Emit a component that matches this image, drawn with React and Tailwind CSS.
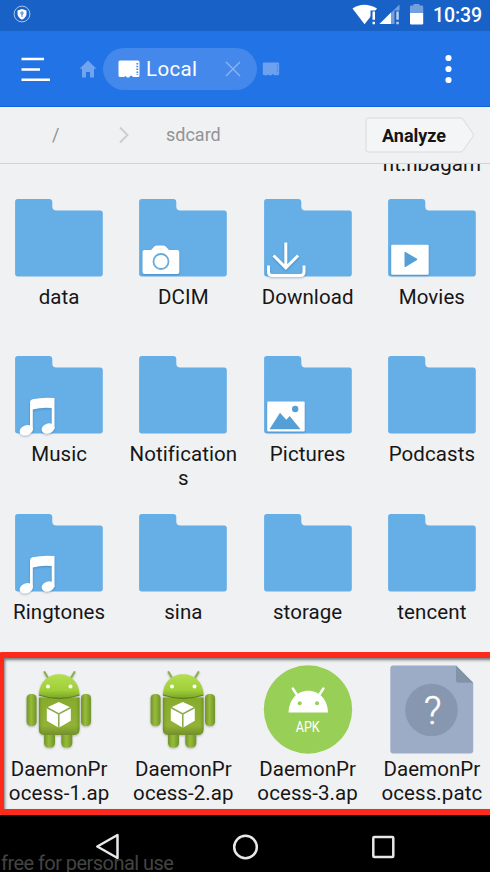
import React from "react";

const Folder = ({ children }) => (
  <svg viewBox="0 0 90 90" className="block w-[90px] h-[90px] overflow-visible">
    <path d="M3.800 6h31.300q3.200 0 3.200 3.200v4.300q0 4 4 4h43.800q2.700 0 2.700 2.700v60.600q0 2.700-2.700 2.700H3.800q-2.700 0-2.700-2.700V8.700Q1.100 6 3.800 6z" fill="#65aee6" />
    <g className="drop-shadow-[0_1px_1px_rgba(20,80,140,0.35)]">{children}</g>
  </svg>
);

const Camera = () => (
  <>
    <path d="M6.500 57h6.500l3.500-3.700q.9-.8 2-.8h7q1.200 0 2 .8l3.500 3.700h8.300q2 0 2 2V79q0 2-2 2H6.500q-2 0-2-2V59q0-2 2-2z" fill="#fff" />
    <circle cx="23" cy="68.500" r="7.500" fill="none" stroke="#6aabdc" strokeWidth="1.800" />
  </>
);
const Download = () => (
  <g fill="none" stroke="#fff" strokeWidth="3">
    <path d="M22.800 49.500v25M10.500 62.500l12.300 12.300 12.300-12.300" />
    <path d="M5.500 72.500v6.500q0 3.500 3.500 3.500h28.500q3.500 0 3.500-3.500v-6.500" />
  </g>
);
const Movie = () => (
  <>
    <rect x="4.200" y="51.800" width="37.500" height="30" rx="1" fill="#fff" />
    <path d="M17.500 59.500q0-1 1-.6L30 65.800q.8.600 0 1.200l-11.500 7q-1 .400-1-.6z" fill="#549fd6" />
  </>
);
const Music = () => (
  <>
    <path d="M16 77.500V52q.2-2.200 2.400-2.700Q28 47 40.500 48v31h-2.800V58q-10-1-18.900 1.500v20H16z" fill="#fff" />
    <ellipse cx="12.300" cy="80.300" rx="6.900" ry="5" transform="rotate(-22 12.300 80.300)" fill="#fff" />
    <ellipse cx="34" cy="78.600" rx="6.600" ry="5" transform="rotate(-22 34 78.600)" fill="#fff" />
  </>
);
const Picture = () => (
  <>
    <rect x="4.200" y="51.500" width="37.500" height="30" rx="1" fill="#fff" />
    <path d="M6.500 79.200L17 62.800l6.300 7 3.400-3.800 10.800 13.200z" fill="#549fd6" />
    <circle cx="32.200" cy="59" r="3.200" fill="#549fd6" />
  </>
);

const Robot = () => (
  <svg viewBox="0 0 90 90" className="block w-[90px] h-[90px]">
    <defs>
      <linearGradient id="head" x1="0" y1="0" x2="0" y2="1">
        <stop offset="0" stopColor="#b4de50" /><stop offset=".65" stopColor="#a0cf38" /><stop offset="1" stopColor="#7ba328" />
      </linearGradient>
      <linearGradient id="limb" x1="0" y1="0" x2="1" y2="0">
        <stop offset="0" stopColor="#71952b" /><stop offset=".45" stopColor="#98bc38" /><stop offset="1" stopColor="#6f932a" />
      </linearGradient>
      <linearGradient id="trunk" x1="0" y1="0" x2="0" y2="1">
        <stop offset="0" stopColor="#86ab2c" /><stop offset=".75" stopColor="#91b236" /><stop offset="1" stopColor="#728f2b" />
      </linearGradient>
      <linearGradient id="edge" x1="0" y1="0" x2="1" y2="0">
        <stop offset="0" stopColor="#4d6e12" stopOpacity=".45" /><stop offset=".12" stopColor="#91b62e" stopOpacity="0" />
        <stop offset=".88" stopColor="#91b62e" stopOpacity="0" /><stop offset="1" stopColor="#4d6e12" stopOpacity=".45" />
      </linearGradient>
    </defs>
    <g className="drop-shadow-[0_1px_1px_rgba(60,70,40,0.35)]">
      <rect x="30" y="63" width="11" height="19.500" rx="4.500" fill="url(#limb)" />
      <rect x="47.300" y="63" width="11" height="19.500" rx="4.500" fill="url(#limb)" />
      <rect x="12.600" y="29" width="10" height="32" rx="4.200" fill="url(#limb)" />
      <rect x="67" y="29" width="10" height="32" rx="4.200" fill="url(#limb)" />
      <path d="M34 13l-3.500-6M57 13l3.500-6" stroke="#8bad50" strokeWidth="2" strokeLinecap="round" />
      <path d="M24.900 32.500h40.600v31.500q0 6-6 6H30.900q-6 0-6-6z" fill="url(#trunk)" />
      <path d="M24.900 32.500h40.600v31.500q0 6-6 6H30.900q-6 0-6-6z" fill="url(#edge)" />
      <path d="M24.900 29.500C25.500 17 34 9.300 45.200 9.300S65 17 65.500 29.500Q55 33.500 45.200 33.500T24.900 29.500z" fill="url(#head)" />
      <path d="M24.900 30Q35 33.500 45.200 33.500T65.500 30" fill="none" stroke="#5e8120" strokeWidth="1.300" />
    </g>
    <circle cx="34" cy="21.500" r="2" fill="#fff" /><circle cx="56.500" cy="21.500" r="2" fill="#fff" />
    <path d="M44.800 37l12 5.500V55.700l-12 7-12-7V42.500z" fill="#fff" />
    <path d="M32.800 42.500l12 6.300 12-6.300M44.800 48.800v13.900" fill="none" stroke="#89a94d" strokeWidth="1.500" />
  </svg>
);

const Apk = () => (
  <svg viewBox="0 0 90 90" className="block w-[90px] h-[90px]">
    <circle cx="45" cy="44.500" r="44.200" fill="#98cf57" />
    <path d="M25.500 47.600C26 34.800 34 25.800 45.200 25.800S64.600 34.800 65 47.600z" fill="#fff" />
    <path d="M34 30l-4.200-6.500M56.200 30l4.200-6.500" stroke="#fff" strokeWidth="2.400" strokeLinecap="round" />
    <circle cx="36.700" cy="38.300" r="2" fill="#98cf57" /><circle cx="54" cy="38.300" r="2" fill="#98cf57" />
    <text x="44.700" y="66.600" textAnchor="middle" fontSize="14" textLength="24" lengthAdjust="spacingAndGlyphs" fill="#fff" className="font-[Roboto,sans-serif]">APK</text>
  </svg>
);

const Unknown = () => (
  <svg viewBox="0 0 90 90" className="block w-[90px] h-[90px]">
    <path d="M6.300.5H69l17.200 17.200V85.500q0 3-3 3H6.300q-3 0-3-3V3.500Q3.300.5 6.300.5z" fill="#9cacc7" />
    <path d="M69 .5l17.200 17.200H71q-2 0-2-2z" fill="#8393a6" />
    <circle cx="44.500" cy="45" r="26.300" fill="#8797af" />
    <text x="45.500" y="58.700" textAnchor="middle" fontSize="39" fill="#fff" className="font-[Roboto,sans-serif] font-light" stroke="#fff" strokeWidth=".4">?</text>
  </svg>
);

const items = [
  [<Folder />, "data"],
  [<Folder><Camera /></Folder>, "DCIM"],
  [<Folder><Download /></Folder>, "Download"],
  [<Folder><Movie /></Folder>, "Movies"],
  [<Folder><Music /></Folder>, "Music"],
  [<Folder />, "Notification s"],
  [<Folder><Picture /></Folder>, "Pictures"],
  [<Folder />, "Podcasts"],
  [<Folder><Music /></Folder>, "Ringtones"],
  [<Folder />, "sina"],
  [<Folder />, "storage"],
  [<Folder />, "tencent"],
  [<Robot />, "DaemonPr ocess-1.ap"],
  [<Robot />, "DaemonPr ocess-2.ap"],
  [<Apk />, "DaemonPr ocess-3.ap"],
  [<Unknown />, "DaemonPr ocess.patc"],
];

const SdCard = ({ className, teeth }) => (
  <svg viewBox="0 0 22 18" className={className}>
    <path d="M2 .5h18q1.500 0 1.500 1.500v13.500q0 1.500-1.500 1.500h-5l-1.200-1.200h-1.300L11 17.500H9L7.500 16 6 17H2Q.5 17 .5 15.500V2Q.5.5 2 .5z" fill="currentColor" />
    <path d="M19.300 3v12" stroke={teeth} strokeWidth="1.800" strokeDasharray="1.500 1.300" />
  </svg>
);

const StatusBar = () => (
  <div className="flex h-[31px] shrink-0 items-center bg-[#1861c7] pl-[13px] pr-[8px] text-white">
    <svg viewBox="0 0 18 18" className="-mt-[3px] h-[18px] w-[18px]">
      <circle cx="9" cy="9" r="7.900" fill="none" stroke="#a9c4ea" strokeWidth="1" />
      <path d="M9 4l4.500 1.500v3q0 4-4.500 6.200Q4.500 12.500 4.500 8.500v-3z" fill="#fff" />
      <circle cx="9" cy="8" r="1.200" fill="none" stroke="#1861c7" strokeWidth=".8" /><path d="M9 9v3" stroke="#1861c7" strokeWidth=".8" />
    </svg>
    <svg viewBox="0 0 76 24" className="ml-auto -mt-[3px] h-6 w-[76px]">
      <path d="M.5 6.500Q12 -1 25 6.500L12.500 22.300z" fill="#fff" />
      <path d="M18.500 8.500h7v14h-7z" fill="#1861c7" />
      <path d="M20.500 9.500h2.500v8.300h-2.500zM20.500 19.700h2.500v2.500h-2.500z" fill="#fff" />
      <path d="M47.500 2.500v19.500H27.500z" fill="#739fdd" />
      <path d="M39 10.500V22H27.500z" fill="#fff" />
      <path d="M42.500 8.500h6v14h-6z" fill="#1861c7" />
      <path d="M44.300 9.500h2.500v8.300h-2.500zM44.300 19.700h2.500v2.500h-2.500z" fill="#b9cfed" />
      <path d="M59 3.500h2.500V2h6v1.500H70q1.200 0 1.200 1.200V11H58V4.700q0-1.200 1-1.200z" fill="#749fdd" />
      <path d="M58 11h13.200v10.300q0 1.200-1.200 1.200H59.200q-1.200 0-1.200-1.200z" fill="#fff" />
    </svg>
    <span className="ml-[5px] text-[19.500px] font-medium leading-6 tracking-[-0.1px]">10:39</span>
  </div>
);

const Toolbar = () => (
  <div className="flex h-[76px] shrink-0 items-center border-b border-[#0f62db] bg-[#2273e6] text-white">
    <svg viewBox="0 0 30 26" className="ml-[21px] h-[26px] w-[30px]">
      <path d="M.500 3H23M.500 13.500h18.500M.500 23.700h28.500" stroke="#fff" strokeWidth="2.400" />
    </svg>
    <svg viewBox="0 0 18 18" className="ml-[28px] h-[18px] w-[18px] text-[#70a4ef]">
      <path d="M9 .5l8.500 8.300H15V17.500h-4V12H7v5.500H3V8.800H.5z" fill="currentColor" />
    </svg>
    <div className="ml-[6px] flex h-[42px] w-[154px] items-center rounded-full bg-[#4488eb] pl-[15px] pr-[16px]">
      <SdCard className="h-[18px] w-[22px]" teeth="#4488eb" />
      <span className="ml-[6px] mt-px text-[20.500px] leading-6 tracking-[0.35px]">Local</span>
      <svg viewBox="0 0 16 16" className="ml-auto h-4 w-4"><path d="M1 1l14 14M15 1L1 15" stroke="#8ab5f4" strokeWidth="1.400" /></svg>
    </div>
    <SdCard className="ml-[5px] h-[14px] w-[18px] text-[#6ca1ef]" teeth="#4488eb" />
    <svg viewBox="0 0 8 30" className="ml-auto mr-[38px] h-[30px] w-2">
      <circle cx="4.500" cy="4" r="3.100" fill="#fff" /><circle cx="4.500" cy="15" r="3.100" fill="#fff" /><circle cx="4.500" cy="26" r="3.100" fill="#fff" />
    </svg>
  </div>
);

const PathBar = () => (
  <div className="flex h-[57px] shrink-0 items-center border-b-[1.500px] border-[#d2d3d5] pb-px text-[18px] text-[#929394]">
    <span className="ml-[52px] w-[8px]">/</span>
    <svg viewBox="0 0 10 18" className="ml-[59px] h-[18px] w-[10px]"><path d="M1 1.500L8.500 9 1 16.500" fill="none" stroke="#ccc" strokeWidth="1.800" /></svg>
    <span className="ml-[37px]">sdcard</span>
    <div className="relative ml-auto mr-[15px] flex h-[36px] w-[110px] items-center pl-[17px] text-[18px] font-bold text-[#151515]">
      <svg viewBox="0 0 110 36" className="absolute inset-0 h-full w-full">
        <path d="M3 1h92q2 0 3 1.300l10 14.200q.8 1.500 0 3L98 33.500q-1 1.500-3 1.500H3q-2 0-2-2V3q0-2 2-2z" fill="#f4f5f6" stroke="#d9dadb" />
      </svg>
      <span className="relative mt-px">Analyze</span>
    </div>
  </div>
);

const NavBar = () => (
  <div className="relative flex h-[57px] shrink-0 items-center overflow-hidden bg-black">
    <span className="absolute left-px top-[36px] whitespace-nowrap text-[20px] leading-6 tracking-[-0.55px] text-[#444]">free for personal use</span>
    <svg viewBox="0 0 490 57" className="relative h-[57px] w-[490px]" fill="none" stroke="#e8e8e8" strokeWidth="2.500" strokeLinejoin="round">
      <path d="M117.500 20v23L97.300 31.500z" />
      <circle cx="245.500" cy="32" r="11.300" />
      <rect x="373.300" y="22" width="20" height="20" rx="1" />
    </svg>
  </div>
);

export default function App() {
  return (
    <div className="flex h-[872px] w-[490px] flex-col overflow-hidden bg-[#f0f1f3] font-[Roboto,sans-serif]">
      <StatusBar />
      <Toolbar />
      <PathBar />
      <div className="relative min-h-0 flex-1 overflow-hidden">
        <div className="-ml-[3px] -mt-[12px] grid h-[41px] w-[497px] grid-cols-4">
          <div className="col-start-4 text-center text-[20.500px] leading-6 text-[#161616]">nt.nbagam</div>
        </div>
        <div className="-ml-[3px] grid w-[497px] auto-rows-[157.300px] grid-cols-4">
          {items.map(([icon, label], i) => (
            <div key={i} className="flex flex-col items-center">
              <div className="h-[90px] w-[90px]">{icon}</div>
              <div className="mt-[2px] w-[110px] text-center text-[20.500px] leading-6 tracking-[0.08px] text-[#161616]">{label}</div>
            </div>
          ))}
        </div>
        <div className="absolute -left-[2.500px] bottom-0 h-[163px] w-[502px] rounded-[4px] border-[6px] border-[#fd2a1b] shadow-[inset_1px_2px_3px_rgba(0,0,0,0.5)]" />
      </div>
      <NavBar />
    </div>
  );
}
